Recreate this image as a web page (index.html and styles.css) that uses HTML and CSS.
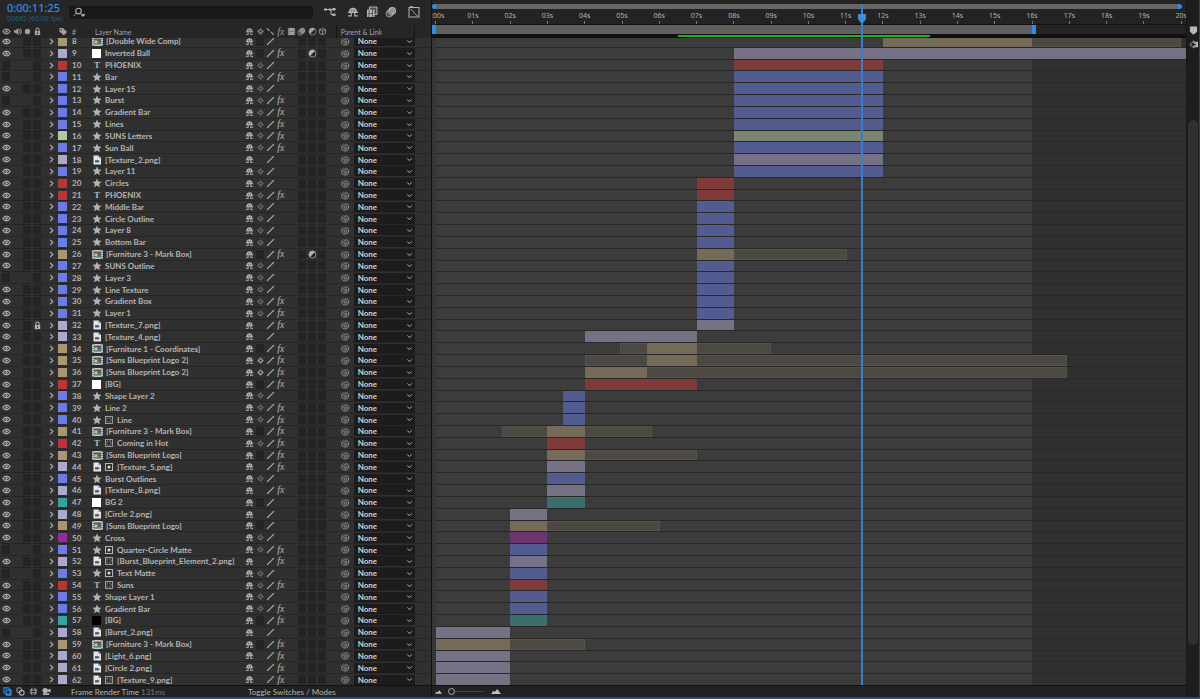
FILE: index.html
```html
<!DOCTYPE html>
<html lang="en">

<head>
    <meta charset="UTF-8">
    <meta name="viewport" content="width=device-width, initial-scale=1.0">
    <link rel="stylesheet" href="styles.css">
    <title>Timeline</title>
</head>

<body>
    <svg class="sprite" aria-hidden="true">
        <symbol id="eye" viewBox="0 0 10 10"><path d="M1 5C3 1.600 7 1.600 9 5C7 8.400 3 8.400 1 5Z" fill="none" stroke="currentColor" stroke-width="1.300"/><circle cx="5" cy="5" r="1.300" fill="currentColor"/></symbol>
        <symbol id="audio" viewBox="0 0 10 10"><path d="M1 3.500h2L6 1v8L3 6.500H1z" fill="currentColor"/><path d="M7 3q1.500 2 0 4M8 1.500q3 3.500 0 7" fill="none" stroke="currentColor"/></symbol>
        <symbol id="solo" viewBox="0 0 10 10"><circle cx="5" cy="5" r="3" fill="currentColor"/></symbol>
        <symbol id="lock" viewBox="0 0 10 10"><rect x="2" y="4.500" width="6" height="4.500" fill="currentColor"/><path d="M3.200 5V3a1.800 1.800 0 0 1 3.600 0v2" fill="none" stroke="currentColor" stroke-width="1.200"/><path d="M5 6v1.800" stroke="#222"/></symbol>
        <symbol id="tag" viewBox="0 0 10 10"><path d="M1 1h4l4.500 4.500L6 9.500 1 5z" fill="currentColor"/><circle cx="3" cy="3" r=".8" fill="#222"/></symbol>
        <symbol id="shy" viewBox="0 0 10 10"><path d="M1.800 5.500V4.500a3.200 3 0 0 1 6.400 0v1z" fill="currentColor"/><path d="M.8 5.300h8.400M1 8.200h3M6 8.200h3M3.500 5v3.200M6.500 5v3.200" stroke="currentColor" fill="none"/><path d="M4 3v1.800M6 3v1.800" stroke="#303030" stroke-width=".6"/></symbol>
        <symbol id="sun" viewBox="0 0 10 10"><circle cx="5" cy="5" r="2" fill="none" stroke="currentColor" stroke-width="1.200"/><path d="M5 1.500v1M5 7.500v1M1.500 5h1M7.500 5h1" stroke="currentColor" stroke-width=".8"/></symbol>
        <symbol id="slash" viewBox="0 0 10 10"><path d="M1.200 8.800L8.800 1.200" stroke="currentColor" stroke-width="1.200"/></symbol>
        <symbol id="quality" viewBox="0 0 10 10"><path d="M1 1.500l3 3M8.800 8.800L5.500 5.500" stroke="currentColor" stroke-width="1.300"/></symbol>
        <symbol id="film" viewBox="0 0 10 10"><rect x="1" y="1" width="8" height="8" fill="currentColor"/><path d="M2 1v8M8 1v8" stroke="#262626" stroke-width=".7" stroke-dasharray="1 1"/><path d="M3 5h4" stroke="#555" stroke-width=".7"/></symbol>
        <symbol id="blur" viewBox="0 0 10 10"><circle cx="6" cy="4" r="2.700" fill="#777" stroke="currentColor"/><circle cx="4.800" cy="5.200" r="2.700" fill="none" stroke="currentColor" stroke-width=".7"/><circle cx="3.600" cy="6.400" r="2.700" fill="none" stroke="currentColor" stroke-width=".7"/></symbol>
        <symbol id="adjust" viewBox="0 0 10 10"><circle cx="5" cy="5" r="3.800" fill="#222" stroke="currentColor" stroke-width=".8"/><path d="M7.700 2.300A3.800 3.800 0 1 0 2.300 7.700Z" fill="currentColor"/></symbol>
        <symbol id="cube" viewBox="0 0 10 10"><path d="M5 1.500l3.500 1.500v4L5 8.500 1.500 7V3zM1.500 3L5 4.500 8.500 3M5 4.500v4" fill="none" stroke="currentColor" stroke-width=".9"/></symbol>
        <symbol id="star" viewBox="0 0 10 10"><path d="M5 .6l1.300 2.900 3.200.3-2.400 2.100.8 3.300L5 7.500 2.100 9.200l.8-3.300L.5 3.800l3.200-.3z" fill="currentColor"/></symbol>
        <symbol id="comp" viewBox="0 0 11 9"><rect width="11" height="9" fill="#c6c9c6"/><path d="M1 0v9M10 0v9" stroke="#444" stroke-dasharray="1 1"/><rect x="2" y="1.500" width="7" height="6" fill="#48635c"/><path d="M2.500 3.500h3v3h-3z" fill="#b9c9c2"/><circle cx="7" cy="3" r="1.300" fill="#a3423c"/><path d="M5.500 5.500h3v1.500h-3z" fill="#4e9465"/></symbol>
        <symbol id="png" viewBox="0 0 10 10"><path d="M1.500.5h5L9 3v6.500H1.500z" fill="#e4e6ea"/><path d="M6.500.5V3H9" fill="#8b8d92"/><path d="M3 5h3v2.500H3z" fill="#59657a"/><path d="M5.500 4.500l2.500 1.700L5.500 8z" fill="#59657a"/></symbol>
        <symbol id="matte" viewBox="0 0 10 10"><rect x="1.500" y="1.500" width="7" height="7" fill="none" stroke="currentColor" stroke-width=".8"/><rect x="3" y="3" width="4" height="4" fill="none" stroke="currentColor" stroke-dasharray="1 2" stroke-dashoffset=".5"/></symbol>
        <symbol id="alpha" viewBox="0 0 10 10"><rect x="1.500" y="1.500" width="7" height="7" fill="none" stroke="currentColor"/><circle cx="5" cy="5" r="1.500" fill="#ddd"/></symbol>
        <symbol id="whip" viewBox="0 0 10 10"><path d="M5 5.500C4 5 5 3.500 6.200 4.500S6 7.500 4.500 7 2.200 4 4 2.600 9 2.500 8.600 5.500 5 9.500 2.700 8.500-.2 4 2.500 1.600" fill="none" stroke="currentColor" stroke-width=".8"/></symbol>
        <symbol id="right" viewBox="0 0 10 10"><path d="M3.500 2l3 3-3 3" fill="none" stroke="currentColor" stroke-width="1.200"/></symbol>
        <symbol id="down" viewBox="0 0 10 10"><path d="M2.500 3.800L5 6.300l2.500-2.500" fill="none" stroke="currentColor" stroke-width="1.100"/></symbol>
        <symbol id="search" viewBox="0 0 12 10"><circle cx="5.500" cy="4" r="2.800" fill="none" stroke="currentColor" stroke-width="1.100"/><path d="M3.400 6L.8 9M8 7.500h4L10 9.500z" stroke="currentColor" fill="currentColor" stroke-width=".8"/></symbol>
        <symbol id="flow" viewBox="0 0 12 12"><path d="M1 3.500h8M7 3.500v5h2" fill="none" stroke="currentColor"/><path d="M0 2.500h3v2H0zM5 2.500h2v2H5zM8.500 2h3v2.500h-3zM8.500 7.500h3V10h-3z" fill="currentColor"/></symbol>
        <symbol id="frames" viewBox="0 0 12 12"><path d="M3.500 1H11v7.500H3.500z" fill="#555" stroke="currentColor"/><path d="M1 3.500h7.500V11H1z" fill="currentColor"/><path d="M3 4v7M6.500 4v7M3 7.500h3.500M5 3h4M9.500 3v4" stroke="#444" stroke-width=".8"/></symbol>
        <symbol id="graph" viewBox="0 0 12 12"><rect x="1" y="1.500" width="10" height="9.500" fill="none" stroke="currentColor"/><path d="M2.500 3.500C5.500 3.500 6 9 9.500 9.500" fill="none" stroke="currentColor"/><path d="M2 1h3" stroke="currentColor" stroke-width="1.500"/></symbol>
        <symbol id="copy" viewBox="0 0 10 10"><path d="M1 1h5l2 2v5H3L1 6zM3.500 3.500H9V9H4z" fill="none" stroke="currentColor" stroke-width="1.200"/></symbol>
        <symbol id="modes" viewBox="0 0 10 10"><rect x="1" y="1" width="5" height="5" rx="1" fill="none" stroke="currentColor"/><circle cx="6.300" cy="6.300" r="2.700" fill="none" stroke="currentColor" stroke-width="1.200"/></symbol>
        <symbol id="inout" viewBox="0 0 10 10"><path d="M3.500 1Q1 5 3.500 9M6.500 1Q9 5 6.500 9M.8 3.500h8.400M.8 6.500h8.400" fill="none" stroke="currentColor"/></symbol>
        <symbol id="render" viewBox="0 0 10 10"><circle cx="3.500" cy="4" r="3" fill="currentColor"/><path d="M6 3l3.500-1v4L6 5zM1 7h7v2H1z" fill="currentColor"/></symbol>
        <symbol id="hills" viewBox="0 0 12 6"><path d="M0 6l3-4 1.500 1.500L7.500 0 12 6z" fill="currentColor"/></symbol>
        <symbol id="marker" viewBox="0 0 10 10"><path d="M1 .5h8v6L5 9.800 1 6.500z" fill="currentColor"/></symbol>
        <symbol id="button" viewBox="0 0 10 10"><path d="M6 2h4v6H6z" fill="currentColor"/><path d="M5.500 1L1 5l4.500 4V6.500H8v-3H5.500z" fill="#222" stroke="currentColor"/></symbol>
    </svg>

    <main class="editor">
        <section class="layers">
            <header class="toolbar">
                <div class="time">
                    <strong>0:00:11:25</strong>
                    <small>00685 (60.00 fps)</small>
                </div>
                <label class="search">
                    <svg><use href="#search"/></svg>
                    <input type="text" aria-label="Search layers">
                </label>
                <button class="tool" aria-label="Mini-Flowchart"><svg><use href="#flow"/></svg></button>
                <div class="tools">
                    <button class="tool" aria-label="Hide shy layers"><svg><use href="#shy"/></svg></button>
                    <button class="tool" aria-label="Frame blending"><svg><use href="#frames"/></svg></button>
                    <button class="tool" aria-label="Motion blur"><svg><use href="#blur"/></svg></button>
                </div>
                <button class="tool" aria-label="Graph editor"><svg><use href="#graph"/></svg></button>
            </header>
            <table>
                <thead>
                    <tr>
                        <th><svg><use href="#eye"/></svg></th>
                        <th><svg><use href="#audio"/></svg></th>
                        <th><svg><use href="#solo"/></svg></th>
                        <th><svg><use href="#lock"/></svg></th>
                        <th></th>
                        <th class="tag"><svg><use href="#tag"/></svg></th>
                        <th class="num">#</th>
                        <th class="name-head">Layer Name</th>
                        <th class="switches">
                            <svg><use href="#shy"/></svg>
                            <svg><use href="#sun"/></svg>
                            <svg><use href="#quality"/></svg>
                            <i class="fx">fx</i>
                            <svg><use href="#film"/></svg>
                            <svg><use href="#blur"/></svg>
                            <svg><use href="#adjust"/></svg>
                            <svg><use href="#cube"/></svg>
                        </th>
                        <th class="parent-head">Parent &amp; Link</th>
                    </tr>
                </thead>
                <tbody class="rows" id="layers"></tbody>
            </table>
            <footer class="status">
                <button class="on" aria-label="Layer switches"><svg><use href="#copy"/></svg></button>
                <button aria-label="Transfer controls"><svg><use href="#modes"/></svg></button>
                <button aria-label="In and out"><svg><use href="#inout"/></svg></button>
                <button aria-label="Render time"><svg><use href="#render"/></svg></button>
                <p>Frame Render Time <span>131ms</span></p>
                <button class="toggle">Toggle Switches / Modes</button>
            </footer>
        </section>

        <section class="timeline">
            <header class="ruler">
                <div class="navigator"></div>
                <div class="ticks" id="ticks"></div>
                <div class="work"><div class="work-area"></div></div>
                <div class="cache"><div class="cached"></div></div>
            </header>
            <div class="viewport">
                <div class="rows" id="tracks"></div>
            </div>
            <footer class="zoom">
                <svg class="small"><use href="#hills"/></svg>
                <input type="range" aria-label="Zoom" min="0" max="100" value="0">
                <svg><use href="#hills"/></svg>
            </footer>
            <div class="overlay"><div class="playhead" id="playhead">
                <svg viewBox="0 0 10 10"><path d="M1 0h8v5L6 9H4L1 5z" fill="#3f8ee0"/></svg>
            </div></div>
        </section>

        <aside class="side">
            <svg><use href="#marker"/></svg>
            <svg><use href="#button"/></svg>
            <div class="scroll"><div class="thumb"></div></div>
        </aside>
    </main>

    <script src="script.js"></script>
</body>

</html>
```
FILE: styles.css
```css
* {
    margin: 0;
    padding: 0;
    box-sizing: border-box;
}

body {
    height: 100vh;
    overflow: hidden;
    background-color: #232323;
    color: #b4b4b4;
    font-family: Lato, "Noto Sans", sans-serif;
    font-size: 8px;
    line-height: 10px;
}

button,
input,
select {
    border: 0;
    background: none;
    color: inherit;
    font: inherit;
    appearance: none;
    outline: none;
}

button {
    display: flex;
    align-items: center;
    justify-content: center;
}

svg {
    display: block;
    width: 9px;
    height: 9px;
    flex: none;
}

.sprite {
    position: absolute;
    width: 0;
    height: 0;
}

.editor {
    display: grid;
    grid-template-columns: 36% 1fr 13px;
    height: 100vh;
    border-right: 1px solid #24486f;
    border-bottom: 2px solid #2b4a70;
}

/* layer list */

.layers {
    display: flex;
    flex-direction: column;
    min-width: 0;
    min-height: 0;
    border-right: 1px solid #111;
}

.toolbar {
    display: flex;
    align-items: center;
    gap: 11px;
    height: 25px;
    padding: 0 11px 1px 7px;
    background-color: #262626;
}

.time {
    width: 51px;
    color: #2d8ceb;
    font-family: "Noto Sans", sans-serif;
    white-space: nowrap;
}

.time strong {
    display: block;
    font-size: 11px;
    font-weight: 500;
    line-height: 12px;
}

.time small {
    display: block;
    color: #1f5c91;
    font-size: 7px;
    line-height: 9px;
}

.search {
    display: flex;
    flex: 1;
    align-items: center;
    height: 13px;
    padding: 0 4px;
    border-radius: 2px;
    background-color: #181818;
}

.search svg {
    width: 12px;
    height: 10px;
}

.search input {
    flex: 1;
    min-width: 0;
}

.tools {
    display: flex;
    gap: 7px;
}

.tool svg {
    width: 12px;
    height: 12px;
}

table {
    display: flex;
    flex: 1;
    flex-direction: column;
    min-height: 0;
    overflow: hidden;
}

thead {
    display: block;
    z-index: 1;
    background-color: #262626;
}

thead tr {
    height: 13px;
}

tr {
    display: grid;
    grid-template-columns: 12px 10px 10px 10px 16px 12px 22px 1fr 83px 87px;
    padding-right: 16px;
}

th {
    color: #a0a0a0;
    font-size: 7px;
    font-weight: 400;
    text-align: left;
}

th,
td {
    display: flex;
    align-items: center;
    justify-content: center;
    min-width: 0;
    min-height: 0;
    white-space: nowrap;
}

th.tag,
.label {
    justify-content: flex-start;
}

th.tag svg {
    width: 10px;
}

.num,
.name,
.name-head,
.parent-head {
    justify-content: flex-start;
}

.num {
    padding-left: 2px;
}

.name-head {
    padding-left: 3px;
}

.parent-head {
    margin-left: 8px;
    padding-left: 4px;
    border-left: 1px solid #151515;
    border-right: 1px solid #151515;
}

.rows {
    display: grid;
    flex: 1;
    grid-auto-rows: 1fr;
    min-height: 0;
    margin-top: -3px;
}

.rows tr {
    border-bottom: 1px solid #262626;
    background-color: #303030;
}

.rows .num,
.name {
    font-weight: 700;
}

.box {
    width: 8px;
    height: 9px;
    background-color: #242424;
}

.twirl svg {
    margin-left: 2px;
}

.swatch {
    width: 9px;
    height: 9px;
    background-color: var(--label);
}

.name {
    gap: 2px;
}

.name svg {
    width: 10px;
    height: 10px;
}

.name .comp {
    width: 11px;
    height: 9px;
}

.name .text {
    padding-left: 1px;
}

.glyph {
    width: 10px;
    font-family: "Liberation Serif", serif;
    font-size: 9px;
    font-weight: 700;
    text-align: center;
}

.solid {
    width: 9px;
    height: 9px;
    margin-right: 1px;
    background-color: #fff;
}

.solid.black {
    background-color: #000;
}

.switches {
    display: grid;
    grid-template-columns: repeat(8, 1fr);
    justify-items: center;
}

.switches .dim {
    color: #757575;
}

.fx {
    font-family: "Liberation Serif", serif;
    font-size: 10px;
    font-style: italic;
}

.parent {
    justify-content: flex-start;
    gap: 4px;
    padding-left: 13px;
}

.parent label {
    display: grid;
    flex: 1;
    align-items: center;
    background-color: #1c1c1c;
}

.parent select {
    grid-area: 1 / 1;
    width: 100%;
    height: 10px;
    padding-left: 4px;
    color: #d2d2d2;
    font-weight: 700;
}

.parent label svg {
    grid-area: 1 / 1;
    justify-self: end;
    margin-right: 1px;
    pointer-events: none;
}

.status,
.zoom {
    display: flex;
    align-items: center;
    height: 12px;
    border-top: 1px solid #101010;
    background-color: #222;
}

.status {
    gap: 4px;
    padding-left: 3px;
}

.status .on {
    color: #2d8ceb;
}

.status p {
    width: 189px;
    padding-left: 16px;
}

.status span {
    color: #777;
}

.toggle {
    white-space: nowrap;
}

/* time ruler and tracks */

.timeline {
    position: relative;
    display: flex;
    flex-direction: column;
    min-width: 0;
    min-height: 0;
    overflow: hidden;
}

.ruler {
    z-index: 1;
    height: 38px;
    padding-top: 4px;
    background-color: #232323;
}

.navigator {
    height: 5px;
    margin-right: 4px;
    border-right: 4px solid #2d8ceb;
    border-left: 4px solid #2d8ceb;
    border-radius: 3px;
    background-color: #666;
}

.ticks {
    display: grid;
    height: 16px;
    margin-left: 4px;
    border-bottom: 1px solid #111;
}

.tick {
    display: flex;
    grid-area: 1 / 1;
    flex-direction: column;
    align-items: center;
    justify-content: space-between;
    width: 0;
    padding-top: 2px;
    font-family: "Noto Sans", sans-serif;
    font-size: 7px;
}

.tick::after {
    width: 1px;
    height: 3px;
    background-color: #777;
    content: "";
}

.work {
    height: 9px;
    padding-left: 4px;
}

.work-area {
    width: calc(16 / 20.13 * 100%);
    height: 9px;
    background-color: #606060;
    box-shadow: -4px 0 #2d8ceb, 4px 0 #2d8ceb;
}

.cache {
    height: 4px;
    padding: 1px 0 1px 4px;
    background-color: #111;
}

.cached {
    width: calc(6.75 / 20.13 * 100%);
    height: 2px;
    margin-left: calc(6.5 / 20.13 * 100%);
    background-color: #22b022;
}

.viewport {
    display: flex;
    flex: 1;
    flex-direction: column;
    min-height: 0;
    padding-left: 4px;
    background-color: #363636;
}

/* both row grids start under their headers, as if scrolled */
table .rows,
.viewport .rows {
    margin: -2px 0 -1px;
}

.viewport .rows {
    background-image: linear-gradient(90deg, #3c3c3c calc(16 / 20.13 * 100%), #303030 0);
}

.track {
    display: grid;
    border-bottom: 1px solid #282828;
}

.bar {
    grid-area: 1 / 1;
    background-color: var(--bar);
}

.bar.ghost {
    border: 1px solid #57524a;
    background-color: #4c4842;
}

.zoom {
    z-index: 1;
    gap: 6px;
    padding-left: 3px;
    color: #c0c0c0;
}

.zoom svg {
    width: 12px;
    height: 5px;
}

.zoom .small {
    width: 7px;
    height: 4px;
}

.zoom input {
    width: 36px;
    height: 8px;
    background: linear-gradient(#444, #444) center / 100% 1px no-repeat;
}

.zoom input::-webkit-slider-thumb {
    width: 7px;
    height: 7px;
    border: 1px solid #b0b0b0;
    border-radius: 50%;
    background-color: #222;
    appearance: none;
}

/* the playhead lies over the ruler and all the tracks */
.overlay {
    position: absolute;
    z-index: 2;
    inset: 4px 0 12px 4px;
    pointer-events: none;
}

.playhead {
    width: 2px;
    height: 100%;
    padding-top: 10px;
    background-color: #3b7dc6;
}

.playhead svg {
    width: 10px;
    height: 10px;
    margin-left: -4px;
}

.side {
    display: flex;
    flex-direction: column;
    align-items: center;
    gap: 5px;
    padding: 26px 0 12px;
    border-left: 1px solid #171717;
    background-color: #1d1d1d;
    color: #b8b8b8;
}

.scroll {
    flex: 1;
    width: 10px;
    padding-top: 66px;
}

.thumb {
    height: 93%;
    border-radius: 5px;
    background-color: #303030;
}
```
FILE: script.js
```javascript
// seconds that fit in the width of the track area
var SPAN = 20.13;

var colors = {
    blue: ["#6b7de4", "#525c91"],
    red: ["#b83637", "#7f3a3a"],
    lav: ["#aaa9ce", "#757286"],
    tan: ["#a99672", "#766b58"],
    green: ["#b1c6a9", "#7b8572"],
    teal: ["#37a39e", "#3d6e6e"],
    purple: ["#962a9c", "#6b3670"]
};

// number, name, kind, color, in, out, flags, [ghost in, ghost out]
// flags: f = effects, h = hidden, l = locked, a = adjustment, c = collapsed, m = matte, p = alpha matte
var layers = [
    [8, "[Double Wide Comp]", "comp", "tan", 12, 16, "", [12, 20]],
    [9, "Inverted Ball", "solid", "lav", 8, 20.13, "fa"],
    [10, "PHOENIX", "text", "red", 8, 12, "h"],
    [11, "Bar", "star", "blue", 8, 12, "hf"],
    [12, "Layer 15", "star", "blue", 8, 12, ""],
    [13, "Burst", "star", "blue", 8, 12, "hf"],
    [14, "Gradient Bar", "star", "blue", 8, 12, "f"],
    [15, "Lines", "star", "blue", 8, 12, "f"],
    [16, "SUNS Letters", "star", "green", 8, 12, "f"],
    [17, "Sun Ball", "star", "blue", 8, 12, "f"],
    [18, "[Texture_2.png]", "png", "lav", 8, 12, ""],
    [19, "Layer 11", "star", "blue", 8, 12, ""],
    [20, "Circles", "star", "red", 7, 8, ""],
    [21, "PHOENIX", "text", "red", 7, 8, "f"],
    [22, "Middle Bar", "star", "blue", 7, 8, ""],
    [23, "Circle Outline", "star", "blue", 7, 8, ""],
    [24, "Layer 8", "star", "blue", 7, 8, ""],
    [25, "Bottom Bar", "star", "blue", 7, 8, ""],
    [26, "[Furniture 3 - Mark Box]", "comp", "tan", 7, 8, "fa", [7, 11.03]],
    [27, "SUNS Outline", "star", "blue", 7, 8, ""],
    [28, "Layer 3", "star", "blue", 7, 8, "h"],
    [29, "Line Texture", "star", "blue", 7, 8, ""],
    [30, "Gradient Box", "star", "blue", 7, 8, "f"],
    [31, "Layer 1", "star", "blue", 7, 8, "f"],
    [32, "[Texture_7.png]", "png", "lav", 7, 8, "fl"],
    [33, "[Texture_4.png]", "png", "lav", 4, 7, ""],
    [34, "[Furniture 1 - Coordinates]", "comp", "tan", 5.67, 7, "f", [4.95, 9]],
    [35, "[Suns Blueprint Logo 2]", "comp", "tan", 5.67, 7, "fc", [4, 16.93]],
    [36, "[Suns Blueprint Logo 2]", "comp", "tan", 4, 5.67, "fc", [4, 16.93]],
    [37, "[BG]", "solid", "red", 4, 7, "f"],
    [38, "Shape Layer 2", "star", "blue", 3.43, 4, ""],
    [39, "Line 2", "star", "blue", 3.43, 4, "f"],
    [40, "Line", "star", "blue", 3.43, 4, "fm"],
    [41, "[Furniture 3 - Mark Box]", "comp", "tan", 3, 4, "f", [1.77, 5.8]],
    [42, "Coming in Hot", "text", "red", 3, 4, "fm"],
    [43, "[Suns Blueprint Logo]", "comp", "tan", 3, 4, "f", [3, 7.02]],
    [44, "[Texture_5.png]", "png", "lav", 3, 4, "fp"],
    [45, "Burst Outlines", "star", "blue", 3, 4, ""],
    [46, "[Texture_8.png]", "png", "lav", 3, 4, "f"],
    [47, "BG 2", "solid", "teal", 3, 4, ""],
    [48, "[Circle 2.png]", "png", "lav", 2, 3, ""],
    [49, "[Suns Blueprint Logo]", "comp", "tan", 2, 3, "", [2, 6.03]],
    [50, "Cross", "star", "purple", 2, 3, ""],
    [51, "Quarter-Circle Matte", "star", "blue", 2, 3, "hfp"],
    [52, "[Burst_Blueprint_Element_2.png]", "png", "lav", 2, 3, "fm"],
    [53, "Text Matte", "star", "blue", 2, 3, "hp"],
    [54, "Suns", "text", "red", 2, 3, "fm"],
    [55, "Shape Layer 1", "star", "blue", 2, 3, ""],
    [56, "Gradient Bar", "star", "blue", 2, 3, "f"],
    [57, "[BG]", "black", "teal", 2, 3, "f"],
    [58, "[Burst_2.png]", "png", "lav", 0, 2, "h"],
    [59, "[Furniture 3 - Mark Box]", "comp", "tan", 0, 2, "f", [0, 4]],
    [60, "[Light_6.png]", "png", "lav", 0, 2, "f"],
    [61, "[Circle 2.png]", "png", "lav", 0, 2, "f"],
    [62, "[Texture_9.png]", "png", "lav", 0, 2, "fm"]
];

function icon(id, cls) {
    return `<svg class="${cls || ""}"><use href="#${id}"/></svg>`;
}

function percent(seconds) {
    return (seconds / SPAN * 100).toFixed(3) + "%";
}

function kindIcon(kind) {
    if (kind == "text") return '<span class="glyph">T</span>';
    if (kind == "solid") return '<span class="solid"></span>';
    if (kind == "black") return '<span class="solid black"></span>';
    return icon(kind, kind);
}

function sunSwitch(kind, has) {
    if (has("c")) return icon("sun");
    if (kind == "star" || kind == "text") return icon("sun", "dim");
    if (kind == "png") return "<span></span>";
    return '<span class="box"></span>';
}

function layerRow(layer) {
    var [num, name, kind, color, start, end, flags] = layer;
    var has = (f) => flags.includes(f);
    var box = '<span class="box"></span>';
    return `<tr>
        <td><button class="${has("h") ? "box" : ""}" aria-label="Show layer ${num}">${has("h") ? "" : icon("eye")}</button></td>
        <td></td>
        <td>${has("h") ? "" : box}</td>
        <td>${has("l") ? icon("lock") : box}</td>
        <td class="twirl">${icon("right")}</td>
        <td class="label"><span class="swatch" style="--label: ${colors[color][0]}"></span></td>
        <td class="num">${num}</td>
        <td class="name">${kindIcon(kind)}${has("m") ? icon("matte") : ""}${has("p") ? icon("alpha") : ""}<span class="text">${name}</span></td>
        <td class="switches">
            ${icon("shy")}${sunSwitch(kind, has)}${icon("slash")}
            ${has("f") ? '<i class="fx">fx</i>' : "<span></span>"}<span></span>
            ${box}${has("a") ? icon("adjust") : box}${box}
        </td>
        <td class="parent">${icon("whip")}<label><select aria-label="Parent of layer ${num}"><option>None</option></select>${icon("down")}</label></td>
    </tr>`;
}

function bar(start, end, cls, color) {
    return `<div class="bar ${cls}" style="margin-left: ${percent(start)}; width: ${percent(end - start)}; --bar: ${color}"></div>`;
}

function trackRow(layer) {
    var [num, name, kind, color, start, end, flags, ghost] = layer;
    return `<div class="track">
        ${ghost ? bar(ghost[0], ghost[1], "ghost", "") : ""}
        ${bar(start, end, "", colors[color][1])}
    </div>`;
}

var ticks = "";
for (var i = 0; i <= 20; i++) {
    var text = i == 0 ? "0:00s" : String(i).padStart(2, "0") + "s";
    ticks += `<span class="tick" style="margin-left: ${percent(i)}">${text}</span>`;
}

document.getElementById("ticks").innerHTML = ticks;
document.getElementById("layers").innerHTML = layers.map(layerRow).join("");
document.getElementById("tracks").innerHTML = layers.map(trackRow).join("");
document.getElementById("playhead").style.marginLeft = percent(11.4);
```
